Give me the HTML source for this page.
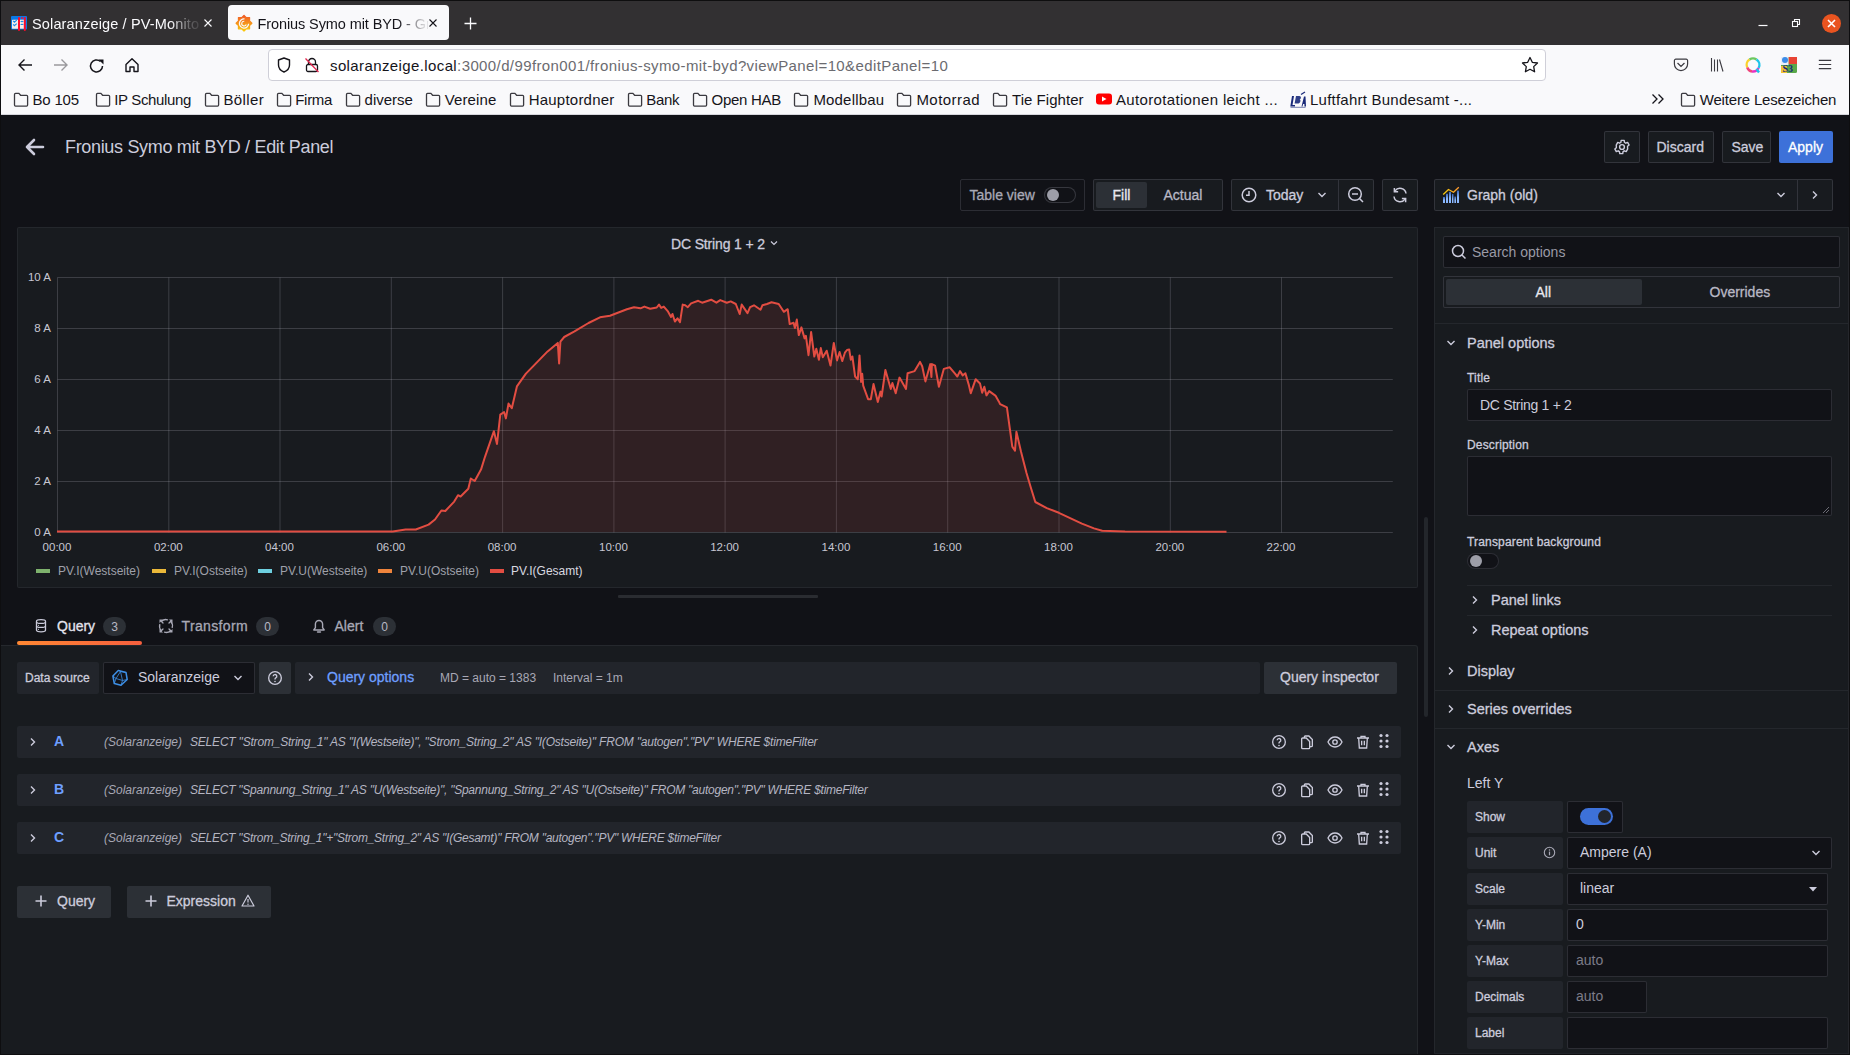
<!DOCTYPE html>
<html><head><meta charset="utf-8">
<style>
*{box-sizing:border-box;margin:0;padding:0}
html,body{width:1850px;height:1055px;overflow:hidden;background:#111217;font-family:"Liberation Sans",sans-serif}
.a{position:absolute}
.t{position:absolute;white-space:nowrap;line-height:1}
.m{-webkit-text-stroke-width:0.3px}
svg{position:absolute;overflow:visible}
/* chrome */
#tabbar{left:0;top:0;width:1850px;height:45px;background:#323032;border-top:1px solid #0e0e0f}
.ftxt{font-size:15px;color:#15141a}
.bm{position:absolute;top:91px;height:18px}
.bm .t{top:2px;left:19px;font-size:15px;color:#15141a;letter-spacing:-0.1px}
/* grafana */
.gtxt{color:#ccccdc}
.btn2{position:absolute;border:1px solid rgba(204,204,220,0.15);background:#181b1f;border-radius:2px}
.lbl{position:absolute;background:#22252b;border-radius:2px}
.inp{position:absolute;background:#111217;border:1px solid rgba(204,204,220,0.15);border-radius:2px}
.sec{position:absolute;background:#2c3036;border-radius:2px}
</style></head><body>

<!-- ================= FIREFOX TAB BAR ================= -->
<div id="tabbar" class="a"></div>
<!-- tab 1 -->
<svg style="left:11px;top:15px" width="16" height="16" viewBox="0 0 16 16"><rect x="0" y="1" width="16" height="13.5" rx="1" fill="#0a78e6"/><rect x="1" y="4.7" width="7" height="9" rx=".5" fill="#f4ece8"/><rect x="8" y="4.7" width="6" height="9" fill="#f4ece8"/><path d="M2.2 5.8l1.2 1.3 2.3-2M2.2 9.3l1.2 1.3 2.3-2" fill="none" stroke="#1b8be8" stroke-width="1.2"/><ellipse cx="11" cy="6.5" rx="1.6" ry=".7" fill="#1b8be8"/><ellipse cx="11" cy="9.4" rx="1.6" ry=".7" fill="#1b8be8"/><rect x="7" y="2" width="2" height="14" rx="1" fill="#ff0a2a"/><rect x="12.8" y="2" width="2" height="14" rx="1" fill="#ff0a2a"/><circle cx="11" cy="3" r=".9" fill="#ff0a2a"/></svg>
<div class="t" style="left:32px;top:17px;width:168px;overflow:hidden;font-size:14.5px;color:#fbfbfe;letter-spacing:0.15px;-webkit-mask-image:linear-gradient(90deg,#000 138px,rgba(0,0,0,0.25) 158px,rgba(0,0,0,0.1) 168px)">Solaranzeige / PV-Monitor</div>
<svg style="left:204px;top:19px" width="8" height="8" viewBox="0 0 8 8"><path d="M0.5 0.5L7.5 7.5M7.5 0.5L0.5 7.5" stroke="#fbfbfe" stroke-width="1.1"/></svg>
<!-- active tab -->
<div class="a" style="left:228px;top:5px;width:221px;height:35px;background:#f9f9fb;border-radius:4px"></div>
<svg style="left:236px;top:14.5px" width="16" height="17" viewBox="0 0 16 17"><defs><linearGradient id="gf" x1="0" y1="0" x2="0" y2="1"><stop offset="0" stop-color="#f05a28"/><stop offset="1" stop-color="#fbca0a"/></linearGradient></defs><path d="M8.00 0.30 L10.30 2.66 L13.59 2.61 L13.54 5.90 L15.90 8.20 L13.54 10.50 L13.59 13.79 L10.30 13.74 L8.00 16.10 L5.70 13.74 L2.41 13.79 L2.46 10.50 L0.10 8.20 L2.46 5.90 L2.41 2.61 L5.70 2.66Z" fill="url(#gf)" stroke="url(#gf)" stroke-width="1.2" stroke-linejoin="round"/><path d="M12.6 8.8A4.6 4.6 0 1 1 8.5 3.9" fill="none" stroke="#f9f9fb" stroke-width="1.3"/><path d="M10.3 9.6A2.4 2.4 0 1 1 8.3 6.2" fill="none" stroke="#f9f9fb" stroke-width="1.1"/></svg>
<div class="t" style="left:257.5px;top:17px;width:170px;overflow:hidden;font-size:14.5px;color:#15141a;letter-spacing:-0.1px;-webkit-mask-image:linear-gradient(90deg,#000 140px,rgba(0,0,0,0.1) 168px)">Fronius Symo mit BYD - Grafana</div>
<svg style="left:429px;top:19px" width="8" height="8" viewBox="0 0 8 8"><path d="M0.5 0.5L7.5 7.5M7.5 0.5L0.5 7.5" stroke="#15141a" stroke-width="1.1"/></svg>
<svg style="left:464px;top:17px" width="13" height="13" viewBox="0 0 13 13"><path d="M6.5 0.5V12.5M0.5 6.5H12.5" stroke="#fbfbfe" stroke-width="1.3"/></svg>
<!-- window controls -->
<svg style="left:1758px;top:19px" width="10" height="10" viewBox="0 0 10 10"><path d="M0.5 6.5H9.5" stroke="#fbfbfe" stroke-width="1.2"/></svg>
<svg style="left:1791px;top:18px" width="10" height="10" viewBox="0 0 10 10"><rect x="1.5" y="3.5" width="5" height="5" fill="none" stroke="#fbfbfe" stroke-width="1.1"/><path d="M3.5 3.5V1.5H8.5V6.5H6.5" fill="none" stroke="#fbfbfe" stroke-width="1.1"/></svg>
<div class="a" style="left:1821.5px;top:13.5px;width:19px;height:19px;border-radius:50%;background:#e95420"></div>
<svg style="left:1826.5px;top:18.5px" width="9" height="9" viewBox="0 0 9 9"><path d="M1 1L8 8M8 1L1 8" stroke="#fff" stroke-width="1.6"/></svg>

<!-- ================= NAV BAR ================= -->
<div class="a" style="left:0;top:45px;width:1850px;height:70px;background:#f9f9fb"></div>
<svg style="left:17px;top:58px" width="16" height="14" viewBox="0 0 16 14"><path d="M15 7H2M7.5 1.5L2 7l5.5 5.5" fill="none" stroke="#15141a" stroke-width="1.4"/></svg>
<svg style="left:53px;top:58px" width="16" height="14" viewBox="0 0 16 14"><path d="M1 7H14M8.5 1.5L14 7l-5.5 5.5" fill="none" stroke="#9a999d" stroke-width="1.4"/></svg>
<svg style="left:89px;top:58px" width="16" height="16" viewBox="0 0 16 16"><path d="M13.5 8a6 6 0 1 1-2-4.5" fill="none" stroke="#15141a" stroke-width="1.5"/><path d="M9.5 1.5h5v5z" fill="#15141a"/></svg>
<svg style="left:124px;top:57px" width="16" height="16" viewBox="0 0 16 16"><path d="M2 7.5L8 1.8l6 5.7V14.5H10V10H6v4.5H2z" fill="none" stroke="#15141a" stroke-width="1.4" stroke-linejoin="round"/></svg>
<!-- url field -->
<div class="a" style="left:268px;top:49px;width:1278px;height:32px;background:#fff;border:1px solid #cfcfd8;border-radius:4px"></div>
<svg style="left:277px;top:57px" width="14" height="16" viewBox="0 0 14 16"><path d="M7 1L1.5 3v5c0 3.5 2.5 5.8 5.5 7 3-1.2 5.5-3.5 5.5-7V3z" fill="none" stroke="#15141a" stroke-width="1.4" stroke-linejoin="round"/></svg>
<svg style="left:305px;top:57px" width="14" height="16" viewBox="0 0 14 16"><path d="M3.5 7V5a3.5 3.5 0 0 1 7 0v2" fill="none" stroke="#15141a" stroke-width="1.3"/><rect x="1.5" y="7.5" width="11" height="7" rx="1.5" fill="none" stroke="#15141a" stroke-width="1.3"/><path d="M0.5 1.5L13.5 15" stroke="#e22850" stroke-width="1.3"/></svg>
<div class="t" style="left:330px;top:58px;font-size:15px;color:#15141a;letter-spacing:0.39px">solaranzeige.local<span style="color:#6b6b70">:3000/d/99fron001/fronius-symo-mit-byd?viewPanel=10&amp;editPanel=10</span></div>
<svg style="left:1521px;top:56px" width="18" height="18" viewBox="0 0 18 18"><path d="M9 1.5l2.3 4.8 5.2.7-3.8 3.6.9 5.2L9 13.3l-4.6 2.5.9-5.2L1.5 7l5.2-.7z" fill="none" stroke="#15141a" stroke-width="1.3" stroke-linejoin="round"/></svg>
<!-- right toolbar icons -->
<svg style="left:1673px;top:57px" width="16" height="16" viewBox="0 0 16 16"><path d="M2.8 2.2h10.4a1.4 1.4 0 0 1 1.4 1.4V7a6.6 6.6 0 0 1-13.2 0V3.6a1.4 1.4 0 0 1 1.4-1.4z" fill="none" stroke="#3b3a40" stroke-width="1.2"/><path d="M4.8 6.3L8 9.4l3.2-3.1" fill="none" stroke="#3b3a40" stroke-width="1.2" stroke-linecap="round"/></svg>
<svg style="left:1710px;top:57px" width="16" height="16" viewBox="0 0 16 16"><path d="M1.5 1v13.5M4.5 2.5v12M7.5 2.5v12M9.5 2.5l3.5 12" fill="none" stroke="#3b3a40" stroke-width="1.1"/></svg>
<svg style="left:1744px;top:56px" width="18" height="18" viewBox="0 0 18 18"><g fill="none" stroke-width="2.4"><path d="M3.2 11.5A6.5 6.5 0 0 1 5.5 3.5" stroke="#fbd22c"/><path d="M5.5 3.5A6.5 6.5 0 0 1 12.5 3.5" stroke="#6cc85f"/><path d="M12.5 3.5A6.5 6.5 0 0 1 14.6 12" stroke="#1ec4ea"/><path d="M14.6 12A6.5 6.5 0 0 1 8 15.5" stroke="#e632c4"/><path d="M8 15.5A6.5 6.5 0 0 1 3.2 11.5" stroke="#f0457a"/><path d="M12.5 13l2.5 3.5" stroke="#1ec4ea"/></g></svg>
<svg style="left:1780px;top:56px" width="18" height="18" viewBox="0 0 18 18"><rect x="1" y="1" width="16" height="16" rx="1.5" fill="#5aa84a"/><rect x="8.5" y="1" width="8.5" height="7" fill="#e84434"/><rect x="1" y="1" width="7.5" height="8" fill="#e8eef8"/><circle cx="5" cy="4" r="3" fill="#3d8de8"/><rect x="1" y="10" width="6" height="7" fill="#f2c431"/><text x="2.5" y="16" font-size="10" font-family="Liberation Serif" font-weight="bold" fill="#1b2a7b">S3</text></svg>
<svg style="left:1818px;top:59px" width="14" height="12" viewBox="0 0 14 12"><path d="M0.8 1.3H13.2M0.8 5.5H13.2M0.8 9.7H13.2" stroke="#3b3a40" stroke-width="1.2"/></svg>

<!-- ================= BOOKMARKS ================= -->
<svg style="left:12.9px;top:92px" width="16" height="15" viewBox="0 0 16 15"><path d="M1.5 2.4c0-.6.4-1 1-1h3.4l1.7 1.9h6c.6 0 1 .4 1 1v8.8c0 .6-.4 1-1 1H2.5c-.6 0-1-.4-1-1z" fill="none" stroke="#3b3a40" stroke-width="1.3"/></svg>
<div class="t ftxt" style="left:32.5px;top:92px;letter-spacing:-0.20px">Bo 105</div>
<svg style="left:95.1px;top:92px" width="16" height="15" viewBox="0 0 16 15"><path d="M1.5 2.4c0-.6.4-1 1-1h3.4l1.7 1.9h6c.6 0 1 .4 1 1v8.8c0 .6-.4 1-1 1H2.5c-.6 0-1-.4-1-1z" fill="none" stroke="#3b3a40" stroke-width="1.3"/></svg>
<div class="t ftxt" style="left:114.2px;top:92px;letter-spacing:-0.34px">IP Schulung</div>
<svg style="left:204.1px;top:92px" width="16" height="15" viewBox="0 0 16 15"><path d="M1.5 2.4c0-.6.4-1 1-1h3.4l1.7 1.9h6c.6 0 1 .4 1 1v8.8c0 .6-.4 1-1 1H2.5c-.6 0-1-.4-1-1z" fill="none" stroke="#3b3a40" stroke-width="1.3"/></svg>
<div class="t ftxt" style="left:223.5px;top:92px;letter-spacing:0.36px">Böller</div>
<svg style="left:275.9px;top:92px" width="16" height="15" viewBox="0 0 16 15"><path d="M1.5 2.4c0-.6.4-1 1-1h3.4l1.7 1.9h6c.6 0 1 .4 1 1v8.8c0 .6-.4 1-1 1H2.5c-.6 0-1-.4-1-1z" fill="none" stroke="#3b3a40" stroke-width="1.3"/></svg>
<div class="t ftxt" style="left:295.2px;top:92px;letter-spacing:-0.27px">Firma</div>
<svg style="left:345px;top:92px" width="16" height="15" viewBox="0 0 16 15"><path d="M1.5 2.4c0-.6.4-1 1-1h3.4l1.7 1.9h6c.6 0 1 .4 1 1v8.8c0 .6-.4 1-1 1H2.5c-.6 0-1-.4-1-1z" fill="none" stroke="#3b3a40" stroke-width="1.3"/></svg>
<div class="t ftxt" style="left:364.6px;top:92px;letter-spacing:-0.03px">diverse</div>
<svg style="left:425px;top:92px" width="16" height="15" viewBox="0 0 16 15"><path d="M1.5 2.4c0-.6.4-1 1-1h3.4l1.7 1.9h6c.6 0 1 .4 1 1v8.8c0 .6-.4 1-1 1H2.5c-.6 0-1-.4-1-1z" fill="none" stroke="#3b3a40" stroke-width="1.3"/></svg>
<div class="t ftxt" style="left:444.7px;top:92px;letter-spacing:0.12px">Vereine</div>
<svg style="left:509px;top:92px" width="16" height="15" viewBox="0 0 16 15"><path d="M1.5 2.4c0-.6.4-1 1-1h3.4l1.7 1.9h6c.6 0 1 .4 1 1v8.8c0 .6-.4 1-1 1H2.5c-.6 0-1-.4-1-1z" fill="none" stroke="#3b3a40" stroke-width="1.3"/></svg>
<div class="t ftxt" style="left:528.7px;top:92px;letter-spacing:0.22px">Hauptordner</div>
<svg style="left:627px;top:92px" width="16" height="15" viewBox="0 0 16 15"><path d="M1.5 2.4c0-.6.4-1 1-1h3.4l1.7 1.9h6c.6 0 1 .4 1 1v8.8c0 .6-.4 1-1 1H2.5c-.6 0-1-.4-1-1z" fill="none" stroke="#3b3a40" stroke-width="1.3"/></svg>
<div class="t ftxt" style="left:646.2px;top:92px;letter-spacing:-0.30px">Bank</div>
<svg style="left:692px;top:92px" width="16" height="15" viewBox="0 0 16 15"><path d="M1.5 2.4c0-.6.4-1 1-1h3.4l1.7 1.9h6c.6 0 1 .4 1 1v8.8c0 .6-.4 1-1 1H2.5c-.6 0-1-.4-1-1z" fill="none" stroke="#3b3a40" stroke-width="1.3"/></svg>
<div class="t ftxt" style="left:711.6px;top:92px;letter-spacing:-0.30px">Open HAB</div>
<svg style="left:793px;top:92px" width="16" height="15" viewBox="0 0 16 15"><path d="M1.5 2.4c0-.6.4-1 1-1h3.4l1.7 1.9h6c.6 0 1 .4 1 1v8.8c0 .6-.4 1-1 1H2.5c-.6 0-1-.4-1-1z" fill="none" stroke="#3b3a40" stroke-width="1.3"/></svg>
<div class="t ftxt" style="left:813.4px;top:92px;letter-spacing:0.18px">Modellbau</div>
<svg style="left:896px;top:92px" width="16" height="15" viewBox="0 0 16 15"><path d="M1.5 2.4c0-.6.4-1 1-1h3.4l1.7 1.9h6c.6 0 1 .4 1 1v8.8c0 .6-.4 1-1 1H2.5c-.6 0-1-.4-1-1z" fill="none" stroke="#3b3a40" stroke-width="1.3"/></svg>
<div class="t ftxt" style="left:916.4px;top:92px;letter-spacing:0.46px">Motorrad</div>
<svg style="left:992px;top:92px" width="16" height="15" viewBox="0 0 16 15"><path d="M1.5 2.4c0-.6.4-1 1-1h3.4l1.7 1.9h6c.6 0 1 .4 1 1v8.8c0 .6-.4 1-1 1H2.5c-.6 0-1-.4-1-1z" fill="none" stroke="#3b3a40" stroke-width="1.3"/></svg>
<div class="t ftxt" style="left:1012.0px;top:92px;letter-spacing:0.04px">Tie Fighter</div>
<svg style="left:1096px;top:92px" width="16" height="14" viewBox="0 0 16 14"><rect x="0" y="1.5" width="16" height="11" rx="3" fill="#ff0000"/><path d="M6 4.5v5l4.5-2.5z" fill="#fff"/></svg>
<div class="t ftxt" style="left:1115.9px;top:92px;letter-spacing:0.35px">Autorotationen leicht ...</div>
<svg style="left:1290px;top:91px" width="16" height="17" viewBox="0 0 16 17"><g fill="#1a2a7a"><path d="M2 5h2l-1.5 9H5v1.5H0.3z"/><path d="M6 5h3.2c1.6 0 2 1.2 1.6 2.2-.2.6-.6 1-1.2 1.2.8.3 1 1 .8 1.8-.3 1.5-1.4 2.3-3 2.3H4.6z" opacity=".9"/><path d="M11.5 15.5l2.5-10h1.5l.5 10h-1.5l-.1-2.5h-1.3l-.6 2.5z"/></g><path d="M11 3.5l4-2.5" stroke="#1a2a7a" stroke-width="1.2"/><path d="M0.5 16.3h15" stroke="#1a2a7a" stroke-width=".6"/></svg>
<div class="t ftxt" style="left:1310.0px;top:92px;letter-spacing:0.23px">Luftfahrt Bundesamt -...</div>
<svg style="left:1651px;top:93px" width="14" height="12" viewBox="0 0 14 12"><path d="M1.5 1.5L6 6l-4.5 4.5M7.5 1.5L12 6l-4.5 4.5" fill="none" stroke="#15141a" stroke-width="1.3"/></svg>
<svg style="left:1679.5px;top:92px" width="16" height="15" viewBox="0 0 16 15"><path d="M1.5 2.4c0-.6.4-1 1-1h3.4l1.7 1.9h6c.6 0 1 .4 1 1v8.8c0 .6-.4 1-1 1H2.5c-.6 0-1-.4-1-1z" fill="none" stroke="#3b3a40" stroke-width="1.3"/></svg>
<div class="t ftxt" style="left:1699.7px;top:92px;letter-spacing:-0.17px">Weitere Lesezeichen</div>

<div class="a" style="left:0;top:113.5px;width:1850px;height:1px;background:#d6d6dc"></div>
<!-- ================= GRAFANA ================= -->
<div class="a" style="left:0;top:115px;width:1850px;height:940px;background:#111217;border-left:1px solid #0b0c0e"></div>


<!-- header -->
<svg style="left:24px;top:138px" width="20" height="18" viewBox="0 0 20 18"><path d="M19 9H3M10 2L3 9l7 7" fill="none" stroke="#ccccdc" stroke-width="2.6" stroke-linejoin="round" stroke-linecap="round"/></svg>
<div class="t" style="left:65px;top:138.3px;font-size:18px;color:#ccccdc;letter-spacing:-0.33px">Fronius Symo mit BYD / Edit Panel</div>
<div class="btn2" style="left:1604px;top:131px;width:36px;height:32px"></div>
<svg style="left:1613px;top:138px" width="18" height="18" viewBox="0 0 24 24"><path d="M19.4 13a7.5 7.5 0 0 0 0-2l2.1-1.6-2-3.5-2.5 1a7.5 7.5 0 0 0-1.7-1L14.9 3.2h-4l-.4 2.7a7.5 7.5 0 0 0-1.7 1l-2.5-1-2 3.5L4.5 11a7.5 7.5 0 0 0 0 2l-2.1 1.6 2 3.5 2.5-1a7.5 7.5 0 0 0 1.7 1l.4 2.7h4l.4-2.7a7.5 7.5 0 0 0 1.7-1l2.5 1 2-3.5z" fill="none" stroke="#ccccdc" stroke-width="1.9" stroke-linejoin="round"/><circle cx="12" cy="12" r="3.2" fill="none" stroke="#ccccdc" stroke-width="1.9"/></svg>
<div class="btn2" style="left:1648px;top:131px;width:66px;height:32px"></div>
<div class="t m" style="left:1656.5px;top:140px;font-size:14px;color:#ccccdc">Discard</div>
<div class="btn2" style="left:1722px;top:131px;width:49px;height:32px"></div>
<div class="t m" style="left:1731.5px;top:140px;font-size:14px;color:#ccccdc">Save</div>
<div class="a" style="left:1779px;top:131px;width:54px;height:32px;background:#3d71d9;border-radius:2px"></div>
<div class="t m" style="left:1788px;top:140px;font-size:14px;color:#fff">Apply</div>

<!-- toolbar -->
<div class="a" style="left:960px;top:179px;width:125px;height:32px;border:1px solid rgba(204,204,220,0.15);border-radius:2px"></div>
<div class="t m" style="left:969.5px;top:188px;font-size:14px;color:#a8a8b5">Table view</div>
<div class="a" style="left:1044px;top:187px;width:32px;height:16px;border:1px solid rgba(204,204,220,0.2);border-radius:8px;background:#111217"></div>
<div class="a" style="left:1047px;top:189px;width:12px;height:12px;border-radius:50%;background:#9d9ea8"></div>

<div class="a" style="left:1093px;top:179px;width:130px;height:32px;border:1px solid rgba(204,204,220,0.15);border-radius:2px;background:#181b1f"></div>
<div class="a" style="left:1096px;top:182px;width:51px;height:26px;background:#2c3036;border-radius:2px"></div>
<div class="t m" style="left:1112.5px;top:188px;font-size:14px;color:#e8e8ef">Fill</div>
<div class="t m" style="left:1163.5px;top:188px;font-size:14px;color:#b8b8c4">Actual</div>

<div class="a" style="left:1231px;top:179px;width:143px;height:32px;border:1px solid rgba(204,204,220,0.15);border-radius:2px;background:#181b1f"></div>
<div class="a" style="left:1338px;top:180px;width:1px;height:30px;background:rgba(204,204,220,0.15)"></div>
<svg style="left:1241px;top:187px" width="16" height="16" viewBox="0 0 16 16"><circle cx="8" cy="8" r="6.8" fill="none" stroke="#ccccdc" stroke-width="1.5"/><path d="M8 4V8.3H5" fill="none" stroke="#ccccdc" stroke-width="1.5"/></svg>
<div class="t m" style="left:1266px;top:188px;font-size:14px;color:#ccccdc">Today</div>
<svg style="left:1317px;top:192px" width="10" height="6" viewBox="0 0 10 6"><path d="M1.5 1l3.5 3.5L8.5 1" fill="none" stroke="#ccccdc" stroke-width="1.4"/></svg>
<svg style="left:1347px;top:186px" width="18" height="18" viewBox="0 0 18 18"><circle cx="8" cy="8" r="6.3" fill="none" stroke="#ccccdc" stroke-width="1.5"/><path d="M5 8h6M12.5 12.5L16 16" fill="none" stroke="#ccccdc" stroke-width="1.5"/></svg>
<div class="a" style="left:1382px;top:179px;width:36px;height:32px;border:1px solid rgba(204,204,220,0.15);border-radius:2px;background:#181b1f"></div>
<svg style="left:1391px;top:186px" width="18" height="18" viewBox="0 0 24 24"><path d="M20 10a8 8 0 0 0-14.6-3.4M4 14a8 8 0 0 0 14.6 3.4" fill="none" stroke="#ccccdc" stroke-width="2"/><path d="M4.5 2.5v5h5M19.5 21.5v-5h-5" fill="none" stroke="#ccccdc" stroke-width="2"/></svg>

<!-- chart panel -->
<div class="a" style="left:17px;top:227px;width:1401px;height:361px;background:#181b1f;border:1px solid rgba(204,204,220,0.07);border-radius:2px"></div>
<div class="t m" style="left:671px;top:237px;font-size:14px;color:#ccccdc;letter-spacing:-0.15px">DC String 1 + 2</div>
<svg style="left:770px;top:240px" width="8" height="6" viewBox="0 0 8 6"><path d="M1 1.5l3 3 3-3" fill="none" stroke="#ccccdc" stroke-width="1.2"/></svg>
<svg style="left:0;top:0" width="1850" height="1055">
<g stroke="rgba(204,204,220,0.2)" stroke-width="1" fill="none" transform="translate(0.5,0.5)"><path d="M57.0 277V532" /><path d="M168.3 277V532" /><path d="M279.5 277V532" /><path d="M390.8 277V532" /><path d="M502.1 277V532" /><path d="M613.4 277V532" /><path d="M724.6 277V532" /><path d="M835.9 277V532" /><path d="M947.2 277V532" /><path d="M1058.5 277V532" /><path d="M1169.8 277V532" /><path d="M1281.0 277V532" /><path d="M57 277H1392.3" /><path d="M57 328H1392.3" /><path d="M57 379H1392.3" /><path d="M57 430H1392.3" /><path d="M57 481H1392.3" /><path d="M57 532H1392.3" /></g>
<path d="M57.0 531.5 L392.8 531.5 L405.6 529.5 L415.8 529.5 L428.6 524.6 L435.0 519.5 L441.4 510.5 L445.3 511.0 L454.2 501.6 L458.0 495.2 L460.6 496.5 L468.3 488.8 L470.8 478.5 L474.7 481.0 L481.0 469.6 L485.0 456.8 L493.9 431.2 L497.0 444.0 L500.3 414.6 L504.1 412.0 L505.9 418.4 L508.5 403.6 L511.8 408.2 L516.9 386.4 L525.9 373.6 L533.5 365.9 L547.6 351.4 L557.8 342.9 L559.1 363.4 L560.4 341.6 L564.2 337.0 L574.5 331.4 L588.5 323.0 L600.0 317.3 L610.0 315.7 L626.9 309.2 L634.0 307.2 L640.5 308.3 L644.4 306.6 L650.2 308.8 L656.7 307.5 L659.0 304.6 L661.2 307.9 L663.8 306.6 L667.7 311.1 L671.0 317.0 L672.5 314.0 L674.9 321.5 L677.5 318.3 L680.0 322.2 L682.7 304.6 L685.2 305.3 L687.8 307.2 L691.1 303.4 L698.2 300.8 L702.1 302.7 L711.2 299.7 L716.4 302.7 L720.3 300.1 L726.8 302.7 L730.7 301.4 L735.8 304.0 L739.7 314.0 L741.7 304.6 L747.5 313.1 L750.1 307.2 L754.0 305.3 L760.5 309.8 L762.4 305.3 L767.0 304.0 L771.5 302.3 L778.7 304.0 L783.8 311.8 L787.7 309.2 L789.7 324.1 L793.6 322.8 L794.9 328.0 L796.8 319.6 L798.8 335.1 L801.4 327.4 L804.6 338.4 L805.9 335.8 L808.5 355.2 L811.1 332.0 L814.3 356.5 L816.3 348.8 L818.9 359.8 L820.8 348.1 L822.8 357.2 L826.7 350.7 L830.5 365.6 L833.8 342.9 L837.0 360.4 L839.6 352.0 L842.2 361.1 L844.9 352.7 L847.0 350.0 L849.2 349.5 L850.8 359.7 L852.4 356.5 L855.1 376.5 L857.8 379.2 L859.5 355.4 L861.1 381.9 L862.2 373.8 L863.2 385.7 L868.1 399.2 L870.8 399.2 L873.5 384.1 L877.8 401.9 L880.5 391.6 L881.6 396.5 L885.4 370.0 L890.8 388.9 L892.4 383.0 L895.7 393.2 L899.5 377.6 L906.0 388.9 L907.6 373.2 L914.6 371.1 L920.0 361.9 L922.2 366.2 L925.4 381.4 L930.3 364.1 L931.4 377.0 L931.9 364.1 L935.1 365.7 L938.9 386.8 L943.8 368.9 L949.7 367.3 L954.6 373.2 L957.3 376.5 L960.0 371.1 L962.7 375.4 L965.4 373.2 L968.6 384.1 L970.8 393.2 L975.7 379.2 L980.0 383.5 L982.2 392.7 L984.3 386.8 L986.5 395.4 L989.2 391.1 L995.7 395.9 L998.8 401.4 L1000.1 404.1 L1006.9 407.4 L1012.3 446.6 L1015.0 450.7 L1016.4 431.8 L1021.1 452.0 L1026.5 473.0 L1030.5 486.5 L1035.3 502.0 L1046.8 508.1 L1058.9 512.8 L1081.9 523.6 L1094.0 528.4 L1102.2 530.8 L1125.1 531.4 L1226.5 531.8 L1226.5 532 L57 532 Z" fill="rgba(226,77,66,0.12)"/>
<path d="M57.0 531.5 L392.8 531.5 L405.6 529.5 L415.8 529.5 L428.6 524.6 L435.0 519.5 L441.4 510.5 L445.3 511.0 L454.2 501.6 L458.0 495.2 L460.6 496.5 L468.3 488.8 L470.8 478.5 L474.7 481.0 L481.0 469.6 L485.0 456.8 L493.9 431.2 L497.0 444.0 L500.3 414.6 L504.1 412.0 L505.9 418.4 L508.5 403.6 L511.8 408.2 L516.9 386.4 L525.9 373.6 L533.5 365.9 L547.6 351.4 L557.8 342.9 L559.1 363.4 L560.4 341.6 L564.2 337.0 L574.5 331.4 L588.5 323.0 L600.0 317.3 L610.0 315.7 L626.9 309.2 L634.0 307.2 L640.5 308.3 L644.4 306.6 L650.2 308.8 L656.7 307.5 L659.0 304.6 L661.2 307.9 L663.8 306.6 L667.7 311.1 L671.0 317.0 L672.5 314.0 L674.9 321.5 L677.5 318.3 L680.0 322.2 L682.7 304.6 L685.2 305.3 L687.8 307.2 L691.1 303.4 L698.2 300.8 L702.1 302.7 L711.2 299.7 L716.4 302.7 L720.3 300.1 L726.8 302.7 L730.7 301.4 L735.8 304.0 L739.7 314.0 L741.7 304.6 L747.5 313.1 L750.1 307.2 L754.0 305.3 L760.5 309.8 L762.4 305.3 L767.0 304.0 L771.5 302.3 L778.7 304.0 L783.8 311.8 L787.7 309.2 L789.7 324.1 L793.6 322.8 L794.9 328.0 L796.8 319.6 L798.8 335.1 L801.4 327.4 L804.6 338.4 L805.9 335.8 L808.5 355.2 L811.1 332.0 L814.3 356.5 L816.3 348.8 L818.9 359.8 L820.8 348.1 L822.8 357.2 L826.7 350.7 L830.5 365.6 L833.8 342.9 L837.0 360.4 L839.6 352.0 L842.2 361.1 L844.9 352.7 L847.0 350.0 L849.2 349.5 L850.8 359.7 L852.4 356.5 L855.1 376.5 L857.8 379.2 L859.5 355.4 L861.1 381.9 L862.2 373.8 L863.2 385.7 L868.1 399.2 L870.8 399.2 L873.5 384.1 L877.8 401.9 L880.5 391.6 L881.6 396.5 L885.4 370.0 L890.8 388.9 L892.4 383.0 L895.7 393.2 L899.5 377.6 L906.0 388.9 L907.6 373.2 L914.6 371.1 L920.0 361.9 L922.2 366.2 L925.4 381.4 L930.3 364.1 L931.4 377.0 L931.9 364.1 L935.1 365.7 L938.9 386.8 L943.8 368.9 L949.7 367.3 L954.6 373.2 L957.3 376.5 L960.0 371.1 L962.7 375.4 L965.4 373.2 L968.6 384.1 L970.8 393.2 L975.7 379.2 L980.0 383.5 L982.2 392.7 L984.3 386.8 L986.5 395.4 L989.2 391.1 L995.7 395.9 L998.8 401.4 L1000.1 404.1 L1006.9 407.4 L1012.3 446.6 L1015.0 450.7 L1016.4 431.8 L1021.1 452.0 L1026.5 473.0 L1030.5 486.5 L1035.3 502.0 L1046.8 508.1 L1058.9 512.8 L1081.9 523.6 L1094.0 528.4 L1102.2 530.8 L1125.1 531.4 L1226.5 531.8" fill="none" stroke="#e24d42" stroke-width="2" stroke-linejoin="round"/>
</svg>
<div class="t" style="right:1799px;top:272.3px;font-size:11.5px;color:#c7c7d2">10 A</div><div class="t" style="right:1799px;top:323.3px;font-size:11.5px;color:#c7c7d2">8 A</div><div class="t" style="right:1799px;top:374.3px;font-size:11.5px;color:#c7c7d2">6 A</div><div class="t" style="right:1799px;top:425.3px;font-size:11.5px;color:#c7c7d2">4 A</div><div class="t" style="right:1799px;top:476.3px;font-size:11.5px;color:#c7c7d2">2 A</div><div class="t" style="right:1799px;top:527.3px;font-size:11.5px;color:#c7c7d2">0 A</div>
<div class="t" style="left:37.0px;width:40px;text-align:center;top:542px;font-size:11.5px;color:#c7c7d2">00:00</div><div class="t" style="left:148.3px;width:40px;text-align:center;top:542px;font-size:11.5px;color:#c7c7d2">02:00</div><div class="t" style="left:259.5px;width:40px;text-align:center;top:542px;font-size:11.5px;color:#c7c7d2">04:00</div><div class="t" style="left:370.8px;width:40px;text-align:center;top:542px;font-size:11.5px;color:#c7c7d2">06:00</div><div class="t" style="left:482.1px;width:40px;text-align:center;top:542px;font-size:11.5px;color:#c7c7d2">08:00</div><div class="t" style="left:593.4px;width:40px;text-align:center;top:542px;font-size:11.5px;color:#c7c7d2">10:00</div><div class="t" style="left:704.6px;width:40px;text-align:center;top:542px;font-size:11.5px;color:#c7c7d2">12:00</div><div class="t" style="left:815.9px;width:40px;text-align:center;top:542px;font-size:11.5px;color:#c7c7d2">14:00</div><div class="t" style="left:927.2px;width:40px;text-align:center;top:542px;font-size:11.5px;color:#c7c7d2">16:00</div><div class="t" style="left:1038.5px;width:40px;text-align:center;top:542px;font-size:11.5px;color:#c7c7d2">18:00</div><div class="t" style="left:1149.8px;width:40px;text-align:center;top:542px;font-size:11.5px;color:#c7c7d2">20:00</div><div class="t" style="left:1261.0px;width:40px;text-align:center;top:542px;font-size:11.5px;color:#c7c7d2">22:00</div>
<!-- legend -->
<div class="a" style="left:36px;top:569px;width:14px;height:4px;background:#7eb26d"></div>
<div class="t" style="left:58px;top:565px;font-size:12px;color:#9fa0aa">PV.I(Westseite)</div>
<div class="a" style="left:152px;top:569px;width:14px;height:4px;background:#eab839"></div>
<div class="t" style="left:174px;top:565px;font-size:12px;color:#9fa0aa">PV.I(Ostseite)</div>
<div class="a" style="left:258px;top:569px;width:14px;height:4px;background:#6ed0e0"></div>
<div class="t" style="left:280px;top:565px;font-size:12px;color:#9fa0aa">PV.U(Westseite)</div>
<div class="a" style="left:378px;top:569px;width:14px;height:4px;background:#ef843c"></div>
<div class="t" style="left:400px;top:565px;font-size:12px;color:#9fa0aa">PV.U(Ostseite)</div>
<div class="a" style="left:490px;top:569px;width:14px;height:4px;background:#e24d42"></div>
<div class="t" style="left:511px;top:565px;font-size:12px;color:#d8d9e0">PV.I(Gesamt)</div>
<!-- splitter -->
<div class="a" style="left:618px;top:595px;width:200px;height:3px;background:#2a2c31;border-radius:1px"></div>

<!-- tabs -->
<svg style="left:35px;top:618px" width="12" height="16" viewBox="0 0 12 16"><path d="M1.5 3.3C1.5 2.3 3.5 1.6 6 1.6s4.5.7 4.5 1.7v9c0 1-2 1.5-4.5 1.5s-4.5-.5-4.5-1.5z" fill="none" stroke="#ccccdc" stroke-width="1.3"/><path d="M1.5 3.9c0 1 2 1.5 4.5 1.5s4.5-.5 4.5-1.5M1.5 7.9c0 1 2 1.5 4.5 1.5s4.5-.5 4.5-1.5" fill="none" stroke="#ccccdc" stroke-width="1.3"/><circle cx="3.5" cy="7.3" r=".6" fill="#ccccdc"/><circle cx="3.5" cy="11.3" r=".6" fill="#ccccdc"/></svg>
<div class="t m" style="left:57px;top:619px;font-size:14px;color:#e4e4ee">Query</div>
<div class="a" style="left:103px;top:617px;width:23px;height:19px;border-radius:10px;background:#2c3036"></div>
<div class="t" style="left:103px;top:621px;width:23px;text-align:center;font-size:12px;color:#b8b8c4">3</div>
<svg style="left:158px;top:618px" width="16" height="16" viewBox="0 0 16 16"><g fill="none" stroke="#a8a8b5" stroke-width="1.3" stroke-linecap="round"><path d="M1.8 6.5A6.3 6.3 0 0 0 3.2 12.5M14.2 9.5A6.3 6.3 0 0 0 12.8 3.5M9.5 1.8A6.3 6.3 0 0 0 3.5 3.2M6.5 14.2A6.3 6.3 0 0 0 12.5 12.8"/><path d="M5 5L3 3M11 5l2-2M5 11l-2 2M11 11l2 2"/></g><g fill="#a8a8b5"><path d="M1.5 1.5h3.5l-3.5 3.5z"/><path d="M14.5 1.5v3.5l-3.5-3.5z"/><path d="M1.5 14.5v-3.5l3.5 3.5z"/><path d="M14.5 14.5h-3.5l3.5-3.5z"/></g></svg>
<div class="t m" style="left:181.5px;top:619px;font-size:14px;color:#a8a8b5;letter-spacing:0.35px">Transform</div>
<div class="a" style="left:256px;top:617px;width:23px;height:19px;border-radius:10px;background:#2c3036"></div>
<div class="t" style="left:256px;top:621px;width:23px;text-align:center;font-size:12px;color:#b8b8c4">0</div>
<svg style="left:313px;top:619px" width="12" height="15" viewBox="0 0 12 15"><path d="M6 1.5a3.6 3.6 0 0 1 3.6 3.6v3.6l1.6 2.3H0.8l1.6-2.3V5.1A3.6 3.6 0 0 1 6 1.5z" fill="none" stroke="#a8a8b5" stroke-width="1.4" stroke-linejoin="round"/><path d="M4.6 13h2.8" stroke="#a8a8b5" stroke-width="1.6" stroke-linecap="round"/></svg>
<div class="t m" style="left:334.5px;top:619px;font-size:14px;color:#a8a8b5">Alert</div>
<div class="a" style="left:373px;top:617px;width:23px;height:19px;border-radius:10px;background:#2c3036"></div>
<div class="t" style="left:373px;top:621px;width:23px;text-align:center;font-size:12px;color:#b8b8c4">0</div>
<!-- query editor -->
<div class="a" style="left:1px;top:645px;width:1417px;height:420px;background:#181b1f;border:1px solid rgba(204,204,220,0.07);border-left:none;border-radius:0 3px 0 0"></div>
<div class="a" style="left:17px;top:641px;width:125px;height:4px;border-radius:2px;background:linear-gradient(90deg,#ff8833,#f55f3e)"></div>
<!-- data source row -->
<div class="lbl" style="left:17px;top:662px;width:82px;height:32px"></div>
<div class="t m" style="left:25px;top:672px;font-size:12px;color:#ccccdc">Data source</div>
<div class="inp" style="left:103px;top:662px;width:152px;height:32px"></div>
<svg style="left:110px;top:668px" width="20" height="20" viewBox="0 0 20 20"><path d="M8.3 2.4 L16.0 4.5 L17.2 11.5 L11.0 17.3 L4.3 15.5 L2.9 8.0Z" fill="none" stroke="#3d8fe6" stroke-width="1.5" stroke-linejoin="round"/><path d="M10.5 3.5 L6.0 10.5 L12.5 12.5Z M12.5 12.5 L11.0 17.3 M12.5 12.5 L17.2 11.5 M10.5 3.5 L8.3 2.4 M6.0 10.5 L2.9 8.0 M6.0 10.5 L4.3 15.5 M10.5 3.5 L16.0 4.5" fill="none" stroke="#3d8fe6" stroke-width="0.8" stroke-linejoin="round"/></svg>
<div class="t" style="left:138px;top:670px;font-size:14px;color:#ccccdc">Solaranzeige</div>
<svg style="left:233px;top:675px" width="10" height="6" viewBox="0 0 10 6"><path d="M1.5 1l3.5 3.5L8.5 1" fill="none" stroke="#ccccdc" stroke-width="1.4"/></svg>
<div class="sec" style="left:259px;top:662px;width:32px;height:32px"></div>
<svg style="left:267px;top:670px" width="16" height="16" viewBox="0 0 24 24"><circle cx="12" cy="12" r="9.5" fill="none" stroke="#ccccdc" stroke-width="2"/><path d="M9.3 9.5a2.7 2.7 0 1 1 3.9 2.4c-.8.4-1.2.9-1.2 1.8v.5" fill="none" stroke="#ccccdc" stroke-width="2"/><circle cx="12" cy="17.3" r="1.2" fill="#ccccdc"/></svg>
<div class="lbl" style="left:295px;top:662px;width:965px;height:32px"></div>
<svg style="left:306px;top:672px" width="10" height="10" viewBox="0 0 10 10"><path d="M3 1.5l3.5 3.5L3 8.5" fill="none" stroke="#ccccdc" stroke-width="1.4"/></svg>
<div class="t m" style="left:327px;top:670px;font-size:14px;color:#6e9fff">Query options</div>
<div class="t" style="left:440px;top:671.5px;font-size:12px;color:#a8a8b5">MD = auto = 1383</div>
<div class="t" style="left:553px;top:671.5px;font-size:12px;color:#a8a8b5">Interval = 1m</div>
<div class="sec" style="left:1264px;top:662px;width:133px;height:32px"></div>
<div class="t m" style="left:1280px;top:670px;font-size:14px;color:#ccccdc">Query inspector</div>

<div class="lbl" style="left:17px;top:726px;width:1384px;height:32px"></div>
<svg style="left:28px;top:737px" width="10" height="10" viewBox="0 0 10 10"><path d="M3 1.5l3.5 3.5L3 8.5" fill="none" stroke="#ccccdc" stroke-width="1.4"/></svg>
<div class="t" style="left:54px;top:734px;font-size:14px;color:#6e9fff;font-weight:bold">A</div>
<div class="t" style="left:104px;top:736px;font-size:12px;color:#a8a8b5;font-style:italic">(Solaranzeige)</div>
<div class="t" style="left:190px;top:736px;font-size:12px;color:#b5b5c2;font-style:italic;letter-spacing:-0.2px">SELECT "Strom_String_1" AS "I(Westseite)", "Strom_String_2" AS "I(Ostseite)" FROM "autogen"."PV" WHERE $timeFilter</div>

<svg style="left:1271px;top:734px" width="16" height="16" viewBox="0 0 24 24"><circle cx="12" cy="12" r="9.5" fill="none" stroke="#ccccdc" stroke-width="2"/><path d="M9.3 9.5a2.7 2.7 0 1 1 3.9 2.4c-.8.4-1.2.9-1.2 1.8v.5" fill="none" stroke="#ccccdc" stroke-width="2"/><circle cx="12" cy="17.3" r="1.2" fill="#ccccdc"/></svg>
<svg style="left:1299px;top:734px" width="16" height="16" viewBox="0 0 24 24"><path d="M8 6V4.5A1.5 1.5 0 0 1 9.5 3h5.3L20 8.2v9.3a1.5 1.5 0 0 1-1.5 1.5H16" fill="none" stroke="#ccccdc" stroke-width="2"/><path d="M5.5 6h5.3L16 11.2v9.3a1.5 1.5 0 0 1-1.5 1.5h-9A1.5 1.5 0 0 1 4 20.5V7.5A1.5 1.5 0 0 1 5.5 6z" fill="none" stroke="#ccccdc" stroke-width="2"/></svg>
<svg style="left:1327px;top:734px" width="16" height="16" viewBox="0 0 24 24"><path d="M1.5 12C4 7 8 4.5 12 4.5S20 7 22.5 12C20 17 16 19.5 12 19.5S4 17 1.5 12z" fill="none" stroke="#ccccdc" stroke-width="2"/><circle cx="12" cy="12" r="3.3" fill="none" stroke="#ccccdc" stroke-width="2"/></svg>
<svg style="left:1355px;top:734px" width="16" height="16" viewBox="0 0 24 24"><path d="M3 6h18M9 6V3.5h6V6M5.5 6l1 15h11l1-15M10 10v7M14 10v7" fill="none" stroke="#ccccdc" stroke-width="2"/></svg>
<svg style="left:1378px;top:733px" width="12" height="16" viewBox="0 0 12 16"><g fill="#ccccdc"><circle cx="3" cy="2.5" r="1.6"/><circle cx="9" cy="2.5" r="1.6"/><circle cx="3" cy="8" r="1.6"/><circle cx="9" cy="8" r="1.6"/><circle cx="3" cy="13.5" r="1.6"/><circle cx="9" cy="13.5" r="1.6"/></g></svg>
<div class="lbl" style="left:17px;top:774px;width:1384px;height:32px"></div>
<svg style="left:28px;top:785px" width="10" height="10" viewBox="0 0 10 10"><path d="M3 1.5l3.5 3.5L3 8.5" fill="none" stroke="#ccccdc" stroke-width="1.4"/></svg>
<div class="t" style="left:54px;top:782px;font-size:14px;color:#6e9fff;font-weight:bold">B</div>
<div class="t" style="left:104px;top:784px;font-size:12px;color:#a8a8b5;font-style:italic">(Solaranzeige)</div>
<div class="t" style="left:190px;top:784px;font-size:12px;color:#b5b5c2;font-style:italic;letter-spacing:-0.24px">SELECT "Spannung_String_1" AS "U(Westseite)", "Spannung_String_2" AS "U(Ostseite)" FROM "autogen"."PV" WHERE $timeFilter</div>

<svg style="left:1271px;top:782px" width="16" height="16" viewBox="0 0 24 24"><circle cx="12" cy="12" r="9.5" fill="none" stroke="#ccccdc" stroke-width="2"/><path d="M9.3 9.5a2.7 2.7 0 1 1 3.9 2.4c-.8.4-1.2.9-1.2 1.8v.5" fill="none" stroke="#ccccdc" stroke-width="2"/><circle cx="12" cy="17.3" r="1.2" fill="#ccccdc"/></svg>
<svg style="left:1299px;top:782px" width="16" height="16" viewBox="0 0 24 24"><path d="M8 6V4.5A1.5 1.5 0 0 1 9.5 3h5.3L20 8.2v9.3a1.5 1.5 0 0 1-1.5 1.5H16" fill="none" stroke="#ccccdc" stroke-width="2"/><path d="M5.5 6h5.3L16 11.2v9.3a1.5 1.5 0 0 1-1.5 1.5h-9A1.5 1.5 0 0 1 4 20.5V7.5A1.5 1.5 0 0 1 5.5 6z" fill="none" stroke="#ccccdc" stroke-width="2"/></svg>
<svg style="left:1327px;top:782px" width="16" height="16" viewBox="0 0 24 24"><path d="M1.5 12C4 7 8 4.5 12 4.5S20 7 22.5 12C20 17 16 19.5 12 19.5S4 17 1.5 12z" fill="none" stroke="#ccccdc" stroke-width="2"/><circle cx="12" cy="12" r="3.3" fill="none" stroke="#ccccdc" stroke-width="2"/></svg>
<svg style="left:1355px;top:782px" width="16" height="16" viewBox="0 0 24 24"><path d="M3 6h18M9 6V3.5h6V6M5.5 6l1 15h11l1-15M10 10v7M14 10v7" fill="none" stroke="#ccccdc" stroke-width="2"/></svg>
<svg style="left:1378px;top:781px" width="12" height="16" viewBox="0 0 12 16"><g fill="#ccccdc"><circle cx="3" cy="2.5" r="1.6"/><circle cx="9" cy="2.5" r="1.6"/><circle cx="3" cy="8" r="1.6"/><circle cx="9" cy="8" r="1.6"/><circle cx="3" cy="13.5" r="1.6"/><circle cx="9" cy="13.5" r="1.6"/></g></svg>
<div class="lbl" style="left:17px;top:822px;width:1384px;height:32px"></div>
<svg style="left:28px;top:833px" width="10" height="10" viewBox="0 0 10 10"><path d="M3 1.5l3.5 3.5L3 8.5" fill="none" stroke="#ccccdc" stroke-width="1.4"/></svg>
<div class="t" style="left:54px;top:830px;font-size:14px;color:#6e9fff;font-weight:bold">C</div>
<div class="t" style="left:104px;top:832px;font-size:12px;color:#a8a8b5;font-style:italic">(Solaranzeige)</div>
<div class="t" style="left:190px;top:832px;font-size:12px;color:#b5b5c2;font-style:italic;letter-spacing:-0.25px">SELECT "Strom_String_1"+"Strom_String_2" AS "I(Gesamt)" FROM "autogen"."PV" WHERE $timeFilter</div>

<svg style="left:1271px;top:830px" width="16" height="16" viewBox="0 0 24 24"><circle cx="12" cy="12" r="9.5" fill="none" stroke="#ccccdc" stroke-width="2"/><path d="M9.3 9.5a2.7 2.7 0 1 1 3.9 2.4c-.8.4-1.2.9-1.2 1.8v.5" fill="none" stroke="#ccccdc" stroke-width="2"/><circle cx="12" cy="17.3" r="1.2" fill="#ccccdc"/></svg>
<svg style="left:1299px;top:830px" width="16" height="16" viewBox="0 0 24 24"><path d="M8 6V4.5A1.5 1.5 0 0 1 9.5 3h5.3L20 8.2v9.3a1.5 1.5 0 0 1-1.5 1.5H16" fill="none" stroke="#ccccdc" stroke-width="2"/><path d="M5.5 6h5.3L16 11.2v9.3a1.5 1.5 0 0 1-1.5 1.5h-9A1.5 1.5 0 0 1 4 20.5V7.5A1.5 1.5 0 0 1 5.5 6z" fill="none" stroke="#ccccdc" stroke-width="2"/></svg>
<svg style="left:1327px;top:830px" width="16" height="16" viewBox="0 0 24 24"><path d="M1.5 12C4 7 8 4.5 12 4.5S20 7 22.5 12C20 17 16 19.5 12 19.5S4 17 1.5 12z" fill="none" stroke="#ccccdc" stroke-width="2"/><circle cx="12" cy="12" r="3.3" fill="none" stroke="#ccccdc" stroke-width="2"/></svg>
<svg style="left:1355px;top:830px" width="16" height="16" viewBox="0 0 24 24"><path d="M3 6h18M9 6V3.5h6V6M5.5 6l1 15h11l1-15M10 10v7M14 10v7" fill="none" stroke="#ccccdc" stroke-width="2"/></svg>
<svg style="left:1378px;top:829px" width="12" height="16" viewBox="0 0 12 16"><g fill="#ccccdc"><circle cx="3" cy="2.5" r="1.6"/><circle cx="9" cy="2.5" r="1.6"/><circle cx="3" cy="8" r="1.6"/><circle cx="9" cy="8" r="1.6"/><circle cx="3" cy="13.5" r="1.6"/><circle cx="9" cy="13.5" r="1.6"/></g></svg>
<!-- add buttons -->
<div class="sec" style="left:17px;top:886px;width:94px;height:32px"></div>
<svg style="left:35px;top:895px" width="12" height="12" viewBox="0 0 12 12"><path d="M6 0.5v11M0.5 6h11" stroke="#ccccdc" stroke-width="1.6"/></svg>
<div class="t m" style="left:57px;top:894px;font-size:14px;color:#ccccdc">Query</div>
<div class="sec" style="left:127px;top:886px;width:144px;height:32px"></div>
<svg style="left:145px;top:895px" width="12" height="12" viewBox="0 0 12 12"><path d="M6 0.5v11M0.5 6h11" stroke="#ccccdc" stroke-width="1.6"/></svg>
<div class="t m" style="left:166.5px;top:894px;font-size:14px;color:#ccccdc">Expression</div>
<svg style="left:241px;top:894px" width="14" height="13" viewBox="0 0 14 13"><path d="M7 1.2L13 12H1z" fill="none" stroke="#ccccdc" stroke-width="1.2" stroke-linejoin="round"/><path d="M7 5v3.5" stroke="#ccccdc" stroke-width="1.2"/><circle cx="7" cy="10.2" r=".7" fill="#ccccdc"/></svg>
<!-- left scrollbar -->
<div class="a" style="left:1424px;top:517px;width:4px;height:200px;border-radius:2px;background:#23262b"></div>

<!-- viz picker -->
<div class="a" style="left:1434px;top:179px;width:399px;height:32px;background:#181b1f;border:1px solid rgba(204,204,220,0.15);border-radius:2px"></div>
<div class="a" style="left:1797px;top:180px;width:1px;height:30px;background:rgba(204,204,220,0.15)"></div>
<svg style="left:1442px;top:186px" width="18" height="18" viewBox="0 0 18 18"><defs><linearGradient id="bg1" x1="0" y1="0" x2="0" y2="1"><stop offset="0" stop-color="#3865b8"/><stop offset=".55" stop-color="#8ab8ff"/></linearGradient><linearGradient id="lg1" x1="0" y1="0" x2="1" y2="0"><stop offset="0" stop-color="#f2cc0c"/><stop offset="1" stop-color="#ff9830"/></linearGradient></defs><g fill="url(#bg1)"><rect x="1" y="11" width="2" height="6"/><rect x="4" y="7.8" width="2" height="9.2"/><rect x="7" y="5.9" width="2" height="11.1"/><rect x="10" y="8" width="1.4" height="9"/><rect x="12.4" y="10.5" width="1.6" height="6.5"/><rect x="15" y="4.6" width="2" height="12.4"/></g><path d="M1.2 8.5L6.5 3.5 11.5 6.3 16.8 1.3" fill="none" stroke="url(#lg1)" stroke-width="1.3" stroke-linejoin="round"/></svg>
<div class="t m" style="left:1467px;top:187.5px;font-size:14px;color:#ccccdc">Graph (old)</div>
<svg style="left:1776px;top:192px" width="10" height="6" viewBox="0 0 10 6"><path d="M1.5 1l3.5 3.5L8.5 1" fill="none" stroke="#ccccdc" stroke-width="1.4"/></svg>
<svg style="left:1812px;top:190px" width="6" height="10" viewBox="0 0 6 10"><path d="M1 1.5l3.5 3.5L1 8.5" fill="none" stroke="#ccccdc" stroke-width="1.4"/></svg>
<!-- options pane -->
<div class="a" style="left:1434px;top:227px;width:420px;height:830px;background:#181b1f;border:1px solid rgba(204,204,220,0.07)"></div>
<div class="inp" style="left:1443px;top:236px;width:397px;height:32px"></div>
<svg style="left:1451px;top:244px" width="16" height="16" viewBox="0 0 16 16"><circle cx="7" cy="7" r="5.5" fill="none" stroke="#ccccdc" stroke-width="1.5"/><path d="M11 11l3.5 3.5" stroke="#ccccdc" stroke-width="1.5"/></svg>
<div class="t" style="left:1472px;top:245px;font-size:14px;color:#9a9aa6">Search options</div>
<div class="a" style="left:1443px;top:276px;width:397px;height:32px;border:1px solid rgba(204,204,220,0.15);border-radius:2px;background:#181b1f"></div>
<div class="a" style="left:1446px;top:279px;width:196px;height:26px;background:#2c3036;border-radius:2px"></div>
<div class="t m" style="left:1535.5px;top:285px;font-size:14px;color:#e8e8ef">All</div>
<div class="t m" style="left:1709.5px;top:285px;font-size:14px;color:#b8b8c4">Overrides</div>
<div class="a" style="left:1435px;top:323px;width:415px;height:1px;background:rgba(204,204,220,0.07)"></div>
<svg style="left:1446px;top:340px" width="10" height="6" viewBox="0 0 10 6"><path d="M1.5 1l3.5 3.5L8.5 1" fill="none" stroke="#ccccdc" stroke-width="1.4"/></svg>
<div class="t m" style="left:1467px;top:336px;font-size:14.5px;color:#ccccdc">Panel options</div>
<div class="t m" style="left:1467px;top:372px;font-size:12px;color:#ccccdc;letter-spacing:0.17px">Title</div>
<div class="inp" style="left:1467px;top:389px;width:365px;height:32px"></div>
<div class="t" style="left:1480px;top:398px;font-size:14px;color:#ccccdc;letter-spacing:-0.3px">DC String 1 + 2</div>
<div class="t m" style="left:1467px;top:439px;font-size:12px;color:#ccccdc;letter-spacing:0.17px">Description</div>
<div class="inp" style="left:1467px;top:456px;width:365px;height:60px"></div>
<svg style="left:1822px;top:506px" width="8" height="8" viewBox="0 0 8 8"><path d="M7 1L1 7M7 4L4 7" stroke="#6a6a73" stroke-width="1"/></svg>
<div class="t m" style="left:1467px;top:536px;font-size:12px;color:#ccccdc;letter-spacing:0.17px">Transparent background</div>
<div class="a" style="left:1467px;top:553px;width:32px;height:16px;border:1px solid rgba(204,204,220,0.15);border-radius:8px;background:#111217"></div>
<div class="a" style="left:1469.5px;top:555px;width:12px;height:12px;border-radius:50%;background:#9d9ea8"></div>
<div class="a" style="left:1467px;top:585px;width:365px;height:1px;background:rgba(204,204,220,0.07)"></div>
<svg style="left:1472px;top:595px" width="6" height="10" viewBox="0 0 6 10"><path d="M1 1.5l3.5 3.5L1 8.5" fill="none" stroke="#ccccdc" stroke-width="1.4"/></svg>
<div class="t m" style="left:1491px;top:593px;font-size:14.5px;color:#ccccdc">Panel links</div>
<div class="a" style="left:1467px;top:615px;width:365px;height:1px;background:rgba(204,204,220,0.07)"></div>
<svg style="left:1472px;top:625px" width="6" height="10" viewBox="0 0 6 10"><path d="M1 1.5l3.5 3.5L1 8.5" fill="none" stroke="#ccccdc" stroke-width="1.4"/></svg>
<div class="t m" style="left:1491px;top:623px;font-size:14.5px;color:#ccccdc">Repeat options</div>
<svg style="left:1448px;top:666px" width="6" height="10" viewBox="0 0 6 10"><path d="M1 1.5l3.5 3.5L1 8.5" fill="none" stroke="#ccccdc" stroke-width="1.4"/></svg>
<div class="t m" style="left:1467px;top:664px;font-size:14.5px;color:#ccccdc">Display</div>
<div class="a" style="left:1435px;top:690px;width:415px;height:1px;background:rgba(204,204,220,0.07)"></div>
<svg style="left:1448px;top:704px" width="6" height="10" viewBox="0 0 6 10"><path d="M1 1.5l3.5 3.5L1 8.5" fill="none" stroke="#ccccdc" stroke-width="1.4"/></svg>
<div class="t m" style="left:1467px;top:702px;font-size:14.5px;color:#ccccdc">Series overrides</div>
<div class="a" style="left:1435px;top:728px;width:415px;height:1px;background:rgba(204,204,220,0.07)"></div>
<svg style="left:1446px;top:744px" width="10" height="6" viewBox="0 0 10 6"><path d="M1.5 1l3.5 3.5L8.5 1" fill="none" stroke="#ccccdc" stroke-width="1.4"/></svg>
<div class="t m" style="left:1467px;top:740px;font-size:14.5px;color:#ccccdc">Axes</div>
<div class="t" style="left:1467px;top:776px;font-size:14px;color:#ccccdc">Left Y</div>
<div class="lbl" style="left:1467px;top:801px;width:96px;height:32px"></div>
<div class="t m" style="left:1475px;top:811px;font-size:12px;color:#ccccdc">Show</div>
<div class="inp" style="left:1567px;top:801px;width:56px;height:32px"></div>
<div class="a" style="left:1580px;top:808px;width:33px;height:17px;border-radius:9px;background:#3d71d9"></div>
<div class="a" style="left:1598px;top:810px;width:13px;height:13px;border-radius:50%;background:#22252b"></div>
<div class="lbl" style="left:1467px;top:837px;width:96px;height:32px"></div>
<div class="t m" style="left:1475px;top:847px;font-size:12px;color:#ccccdc">Unit</div>
<div class="inp" style="left:1567px;top:837px;width:265px;height:32px"></div><div class="t" style="left:1580px;top:845px;font-size:14px;color:#ccccdc">Ampere (A)</div><svg style="left:1811px;top:850px" width="10" height="6" viewBox="0 0 10 6"><path d="M1.5 1l3.5 3.5L8.5 1" fill="none" stroke="#ccccdc" stroke-width="1.4"/></svg><svg style="left:1543px;top:846px" width="13" height="13" viewBox="0 0 14 14"><circle cx="7" cy="7" r="5.6" fill="none" stroke="#a8a8b5" stroke-width="1.2"/><path d="M7 6v4" stroke="#a8a8b5" stroke-width="1.3"/><circle cx="7" cy="4.2" r=".8" fill="#a8a8b5"/></svg>
<div class="lbl" style="left:1467px;top:873px;width:96px;height:32px"></div>
<div class="t m" style="left:1475px;top:883px;font-size:12px;color:#ccccdc">Scale</div>
<div class="inp" style="left:1567px;top:873px;width:261px;height:32px"></div><div class="t" style="left:1580px;top:881px;font-size:14px;color:#ccccdc">linear</div><svg style="left:1809px;top:887px" width="8" height="5" viewBox="0 0 8 5"><path d="M0 0h8L4 4.5z" fill="#ccccdc"/></svg>
<div class="lbl" style="left:1467px;top:909px;width:96px;height:32px"></div>
<div class="t m" style="left:1475px;top:919px;font-size:12px;color:#ccccdc">Y-Min</div>
<div class="inp" style="left:1567px;top:909px;width:261px;height:32px"></div><div class="t" style="left:1576px;top:917px;font-size:14px;color:#ccccdc">0</div>
<div class="lbl" style="left:1467px;top:945px;width:96px;height:32px"></div>
<div class="t m" style="left:1475px;top:955px;font-size:12px;color:#ccccdc">Y-Max</div>
<div class="inp" style="left:1567px;top:945px;width:261px;height:32px"></div><div class="t" style="left:1576px;top:953px;font-size:14px;color:#7c7c88">auto</div>
<div class="lbl" style="left:1467px;top:981px;width:96px;height:32px"></div>
<div class="t m" style="left:1475px;top:991px;font-size:12px;color:#ccccdc">Decimals</div>
<div class="inp" style="left:1567px;top:981px;width:80px;height:32px"></div><div class="t" style="left:1576px;top:989px;font-size:14px;color:#7c7c88">auto</div>
<div class="lbl" style="left:1467px;top:1017px;width:96px;height:32px"></div>
<div class="t m" style="left:1475px;top:1027px;font-size:12px;color:#ccccdc">Label</div>
<div class="inp" style="left:1567px;top:1017px;width:261px;height:32px"></div>



<div class="a" style="left:1434px;top:1053px;width:415px;height:1px;background:#202329"></div>
<div class="a" style="left:1848px;top:227px;width:1px;height:827px;background:#25272c"></div>
<div class="a" style="left:0;top:0;width:1px;height:1055px;background:#0e0e10"></div>
<div class="a" style="left:1849px;top:0;width:1px;height:1055px;background:#0e0e10"></div>
<div class="a" style="left:0;top:1054px;width:1850px;height:1px;background:#0e0e10"></div>
</body></html>
